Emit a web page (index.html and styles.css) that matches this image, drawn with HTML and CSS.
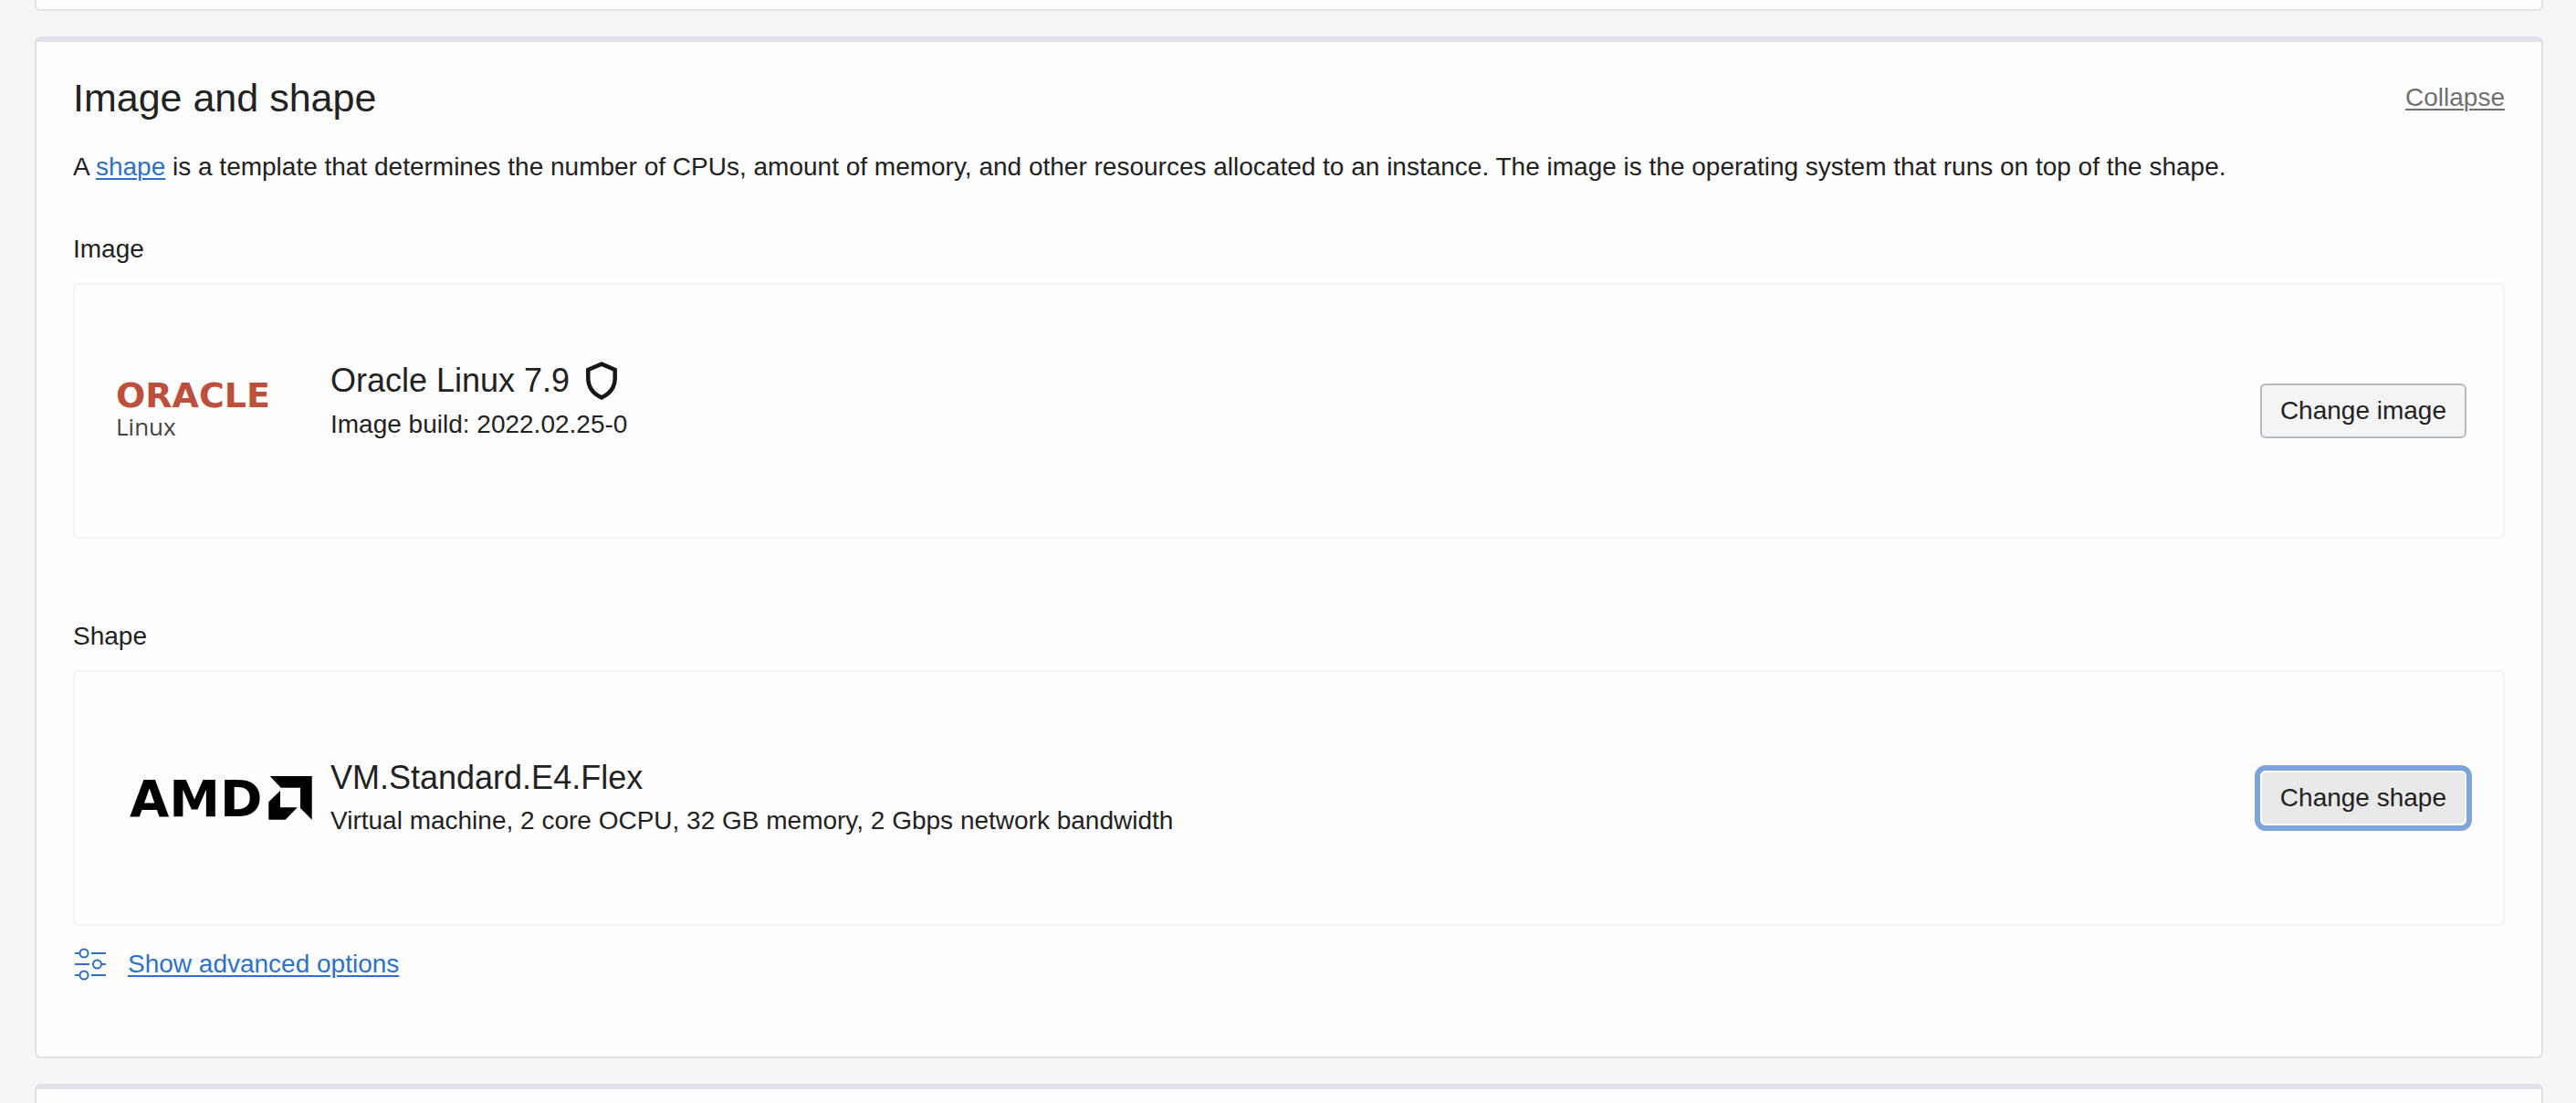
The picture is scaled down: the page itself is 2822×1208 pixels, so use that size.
FILE: index.html
```html
<!DOCTYPE html>
<html lang="en">
<head>
<meta charset="utf-8">
<meta name="viewport" content="width=device-width, initial-scale=1">
<title>Create compute instance</title>
<link rel="stylesheet" href="styles.css">
</head>
<body>
<main class="page">
  <section class="card card-previous"></section>

  <section class="card card-main">
    <header class="card-header">
      <h2 class="card-title">Image and shape</h2>
      <a class="collapse-link" href="#">Collapse</a>
    </header>
    <p class="description">A <a class="link" href="#">shape</a> is a template that determines the number of CPUs, amount of memory, and other resources allocated to an instance. The image is the operating system that runs on top of the shape.</p>

    <section class="field">
      <h3 class="field-label">Image</h3>
      <div class="option">
        <svg class="logo" viewBox="0 0 280 100" role="img" aria-label="Oracle Linux">
          <text class="logo-oracle" x="45" y="46">ORACLE</text>
          <text class="logo-linux" x="45" y="77">Linux</text>
        </svg>
        <div class="option-text option-text-raised">
          <div class="option-name">Oracle Linux 7.9
            <svg class="shield" viewBox="0 0 34 42" aria-hidden="true">
              <path d="M17 2.600 31.700 9V18C31.700 27.500 26.500 35 17 39.400 7.500 35 2.300 27.500 2.300 18V9Z" fill="none" stroke="#161616" stroke-width="4.500"/>
            </svg>
          </div>
          <div class="option-detail">Image build: 2022.02.25-0</div>
        </div>
        <button class="button" type="button">Change image</button>
      </div>
    </section>

    <section class="field field-shape">
      <h3 class="field-label">Shape</h3>
      <div class="option">
        <svg class="logo" viewBox="0 0 280 100" role="img" aria-label="AMD">
          <text class="logo-amd" x="60" y="70">AMD</text>
          <path d="M213.700 26H259.700V73.700L247 61V38.700H225.700ZM212.300 54.300 225 42V60.300H243.700L230.700 73.700H212.300Z"/>
        </svg>
        <div class="option-text">
          <div class="option-name">VM.Standard.E4.Flex</div>
          <div class="option-detail">Virtual machine, 2 core OCPU, 32 GB memory, 2 Gbps network bandwidth</div>
        </div>
        <button class="button button-focused" type="button">Change shape</button>
      </div>
    </section>

    <div class="advanced">
      <svg class="sliders" viewBox="0 0 36 36" fill="none" stroke="#2f70c8" stroke-width="2" aria-hidden="true">
        <path d="M2 6H7M20 6H36M2 18H18M31 18H36M2 30H7M20 30H36"/>
        <circle cx="12" cy="6" r="4.500"/>
        <circle cx="26.500" cy="18" r="4.500"/>
        <circle cx="12" cy="30" r="4.500"/>
      </svg>
      <a class="link" href="#">Show advanced options</a>
    </div>
  </section>

  <section class="card card-next"></section>
</main>
</body>
</html>
```
FILE: styles.css
```css
* {
  box-sizing: border-box;
}

body {
  margin: 0;
  background: #f6f6f6;
  color: #222;
  font: 28px/34px "Liberation Sans", Arial, sans-serif;
}

.page {
  display: flex;
  flex-direction: column;
  gap: 28px;
  min-height: 100vh;
  padding: 0 36px 0 38px;
}

.card {
  background: #fefefe;
  border: 2px solid #e1e2e7;
  border-top-width: 6px;
  border-radius: 6px;
}

.card-previous {
  height: 12px;
  border-top: 0;
  border-top-left-radius: 0;
  border-top-right-radius: 0;
}

.card-main {
  padding: 37px 40px 83px;
}

.card-next {
  flex: 1;
  border-bottom: 0;
  border-bottom-left-radius: 0;
  border-bottom-right-radius: 0;
}

.card-header {
  display: flex;
  align-items: center;
  justify-content: space-between;
}

.card-title {
  margin: 0;
  font-size: 43px;
  font-weight: 400;
  line-height: 48px;
}

.link {
  color: #2f70c8;
}

.link,
.collapse-link {
  text-decoration-thickness: 2px;
  text-underline-offset: 3px;
}

.collapse-link {
  color: #707070;
}

.description {
  margin: 35px 0 56px;
}

.field-shape {
  margin-top: 90px;
}

.field-label {
  margin: 0 0 20px;
  font-size: 28px;
  font-weight: 400;
}

.option {
  display: flex;
  align-items: center;
  min-height: 280px;
  padding-right: 40px;
  border: 2px solid #f4f4f4;
  border-radius: 6px;
}

.logo {
  flex: none;
  width: 280px;
  height: 100px;
}

.logo-oracle {
  fill: #bb513d;
  font: bold 38px "DejaVu Sans", sans-serif;
}

.logo-linux {
  fill: #45413f;
  font: 26px "Open Sans", sans-serif;
}

.logo-amd {
  fill: #000;
  font: bold 56px "DejaVu Sans", sans-serif;
}

.option-text {
  display: grid;
  flex: 1;
  gap: 10px;
}

.option-text-raised {
  padding-bottom: 22px;
}

.option-name {
  display: flex;
  align-items: center;
  gap: 18px;
  font-size: 36px;
  line-height: 40px;
}

.shield {
  width: 34px;
  height: 42px;
}

.button {
  height: 60px;
  padding: 0 20px;
  border: 2px solid #b4b9be;
  border-radius: 6px;
  background: #f4f4f4;
  color: #222;
  font: inherit;
}

.button-focused {
  border-color: #fff;
  background: #e9e9e9;
  box-shadow: 0 0 0 6px #7ea5da;
}

.advanced {
  display: flex;
  align-items: center;
  gap: 24px;
  margin-top: 24px;
}

.sliders {
  width: 36px;
  height: 36px;
}
```
